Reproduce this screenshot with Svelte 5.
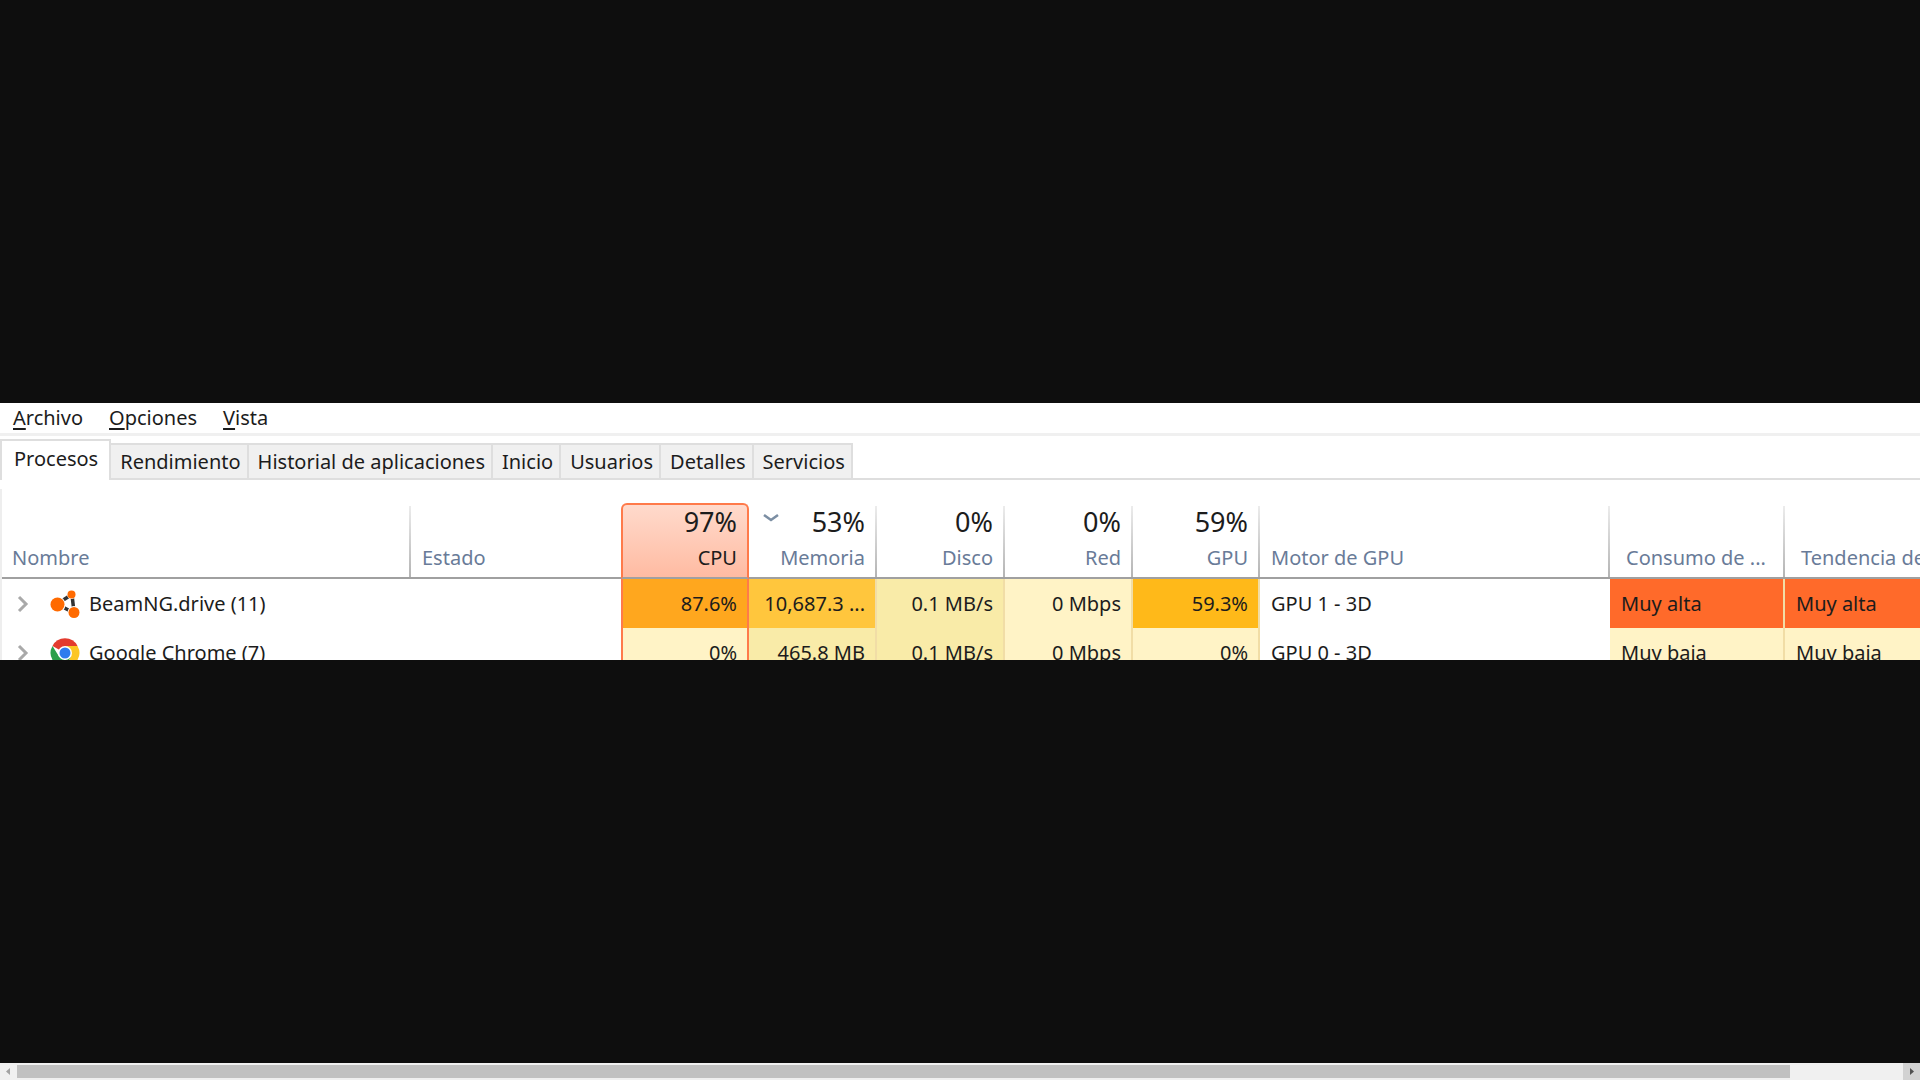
<script>
const menus = ["Archivo", "Opciones", "Vista"]
const tabs = ["Procesos", "Rendimiento", "Historial de aplicaciones", "Inicio", "Usuarios", "Detalles", "Servicios"]
const columns = [
    { id: "name", label: "Nombre" },
    { id: "status", label: "Estado" },
    { id: "cpu", label: "CPU", total: "97%" },
    { id: "memory", label: "Memoria", total: "53%" },
    { id: "disk", label: "Disco", total: "0%" },
    { id: "network", label: "Red", total: "0%" },
    { id: "gpu", label: "GPU", total: "59%" },
    { id: "engine", label: "Motor de GPU" },
    { id: "power", label: "Consumo de ..." },
    { id: "trend", label: "Tendencia de" }
]
const processes = [
    {
        name: "BeamNG.drive (11)",
        icon: "beam",
        cells: [
            ["cpu", "87.6%", "heat5"],
            ["memory", "10,687.3 ...", "heat3"],
            ["disk", "0.1 MB/s", "heat2"],
            ["network", "0 Mbps", "heat1"],
            ["gpu", "59.3%", "heat4"],
            ["engine", "GPU 1 - 3D", ""],
            ["power", "Muy alta", "heat6"],
            ["trend", "Muy alta", "heat6"]
        ]
    },
    {
        name: "Google Chrome (7)",
        icon: "chrome",
        cells: [
            ["cpu", "0%", "heat1"],
            ["memory", "465.8 MB", "heat2"],
            ["disk", "0.1 MB/s", "heat2"],
            ["network", "0 Mbps", "heat1"],
            ["gpu", "0%", "heat1"],
            ["engine", "GPU 0 - 3D", ""],
            ["power", "Muy baja", "heat1"],
            ["trend", "Muy baja", "heat1"]
        ]
    }
]
let selected = $state("Procesos")
</script>

<div class="page">
    <main class="stage">
        <div class="window">
            <nav class="menu">
                {#each menus as menu}
                    <button><u>{menu[0]}</u>{menu.slice(1)}</button>
                {/each}
            </nav>
            <div class="tabs" role="tablist">
                {#each tabs as tab}
                    <button role="tab" class:active={selected === tab} aria-selected={selected === tab} onclick={() => selected = tab}>{tab}</button>
                {/each}
            </div>
            <div class="list">
                <table>
                    <colgroup>
                        {#each columns as column}
                            <col class="col-{column.id}" />
                        {/each}
                    </colgroup>
                    <thead>
                        <tr>
                            {#each columns as column}
                                <th class={column.id} class:number={column.total}>
                                    {#if column.total}
                                        <div class="total">
                                            {#if column.id === "memory"}
                                                <svg class="sort" width="16" height="10" viewBox="0 0 16 10"><path d="M1 2l7 5 7-5" fill="none" stroke="#7b8ea3" stroke-width="2.6" /></svg>
                                            {/if}
                                            <span>{column.total}</span>
                                        </div>
                                    {/if}
                                    <div class="label">{column.label}</div>
                                </th>
                            {/each}
                        </tr>
                    </thead>
                    <tbody>
                        {#each processes as process}
                            <tr>
                                <td class="name">
                                    <div class="process">
                                        <button class="expand" aria-label="Expandir {process.name}">
                                            <svg width="12" height="18" viewBox="0 0 12 18"><path d="M2 2l7 7-7 7" fill="none" stroke="#a9a9a9" stroke-width="3" /></svg>
                                        </button>
                                        {#if process.icon === "beam"}
                                            <svg width="30" height="30" viewBox="0 0 30 30">
                                                <path d="M7 15L21 6M7 15l17 9M22 6l2 17" stroke="#333" stroke-width="3.500" />
                                                <circle cx="7.500" cy="15.500" r="8" fill="#fff" />
                                                <circle cx="21.500" cy="5.500" r="4.500" fill="#fff" />
                                                <circle cx="24" cy="23.500" r="6.500" fill="#fff" />
                                                <circle cx="7.500" cy="15.500" r="7" fill="#ff6a00" />
                                                <circle cx="21.500" cy="5.500" r="4" fill="#ff6a00" />
                                                <circle cx="24" cy="23.500" r="5.500" fill="#ff6a00" />
                                            </svg>
                                        {:else}
                                            <svg width="30" height="30" viewBox="0 0 30 30">
                                                <path d="M15 15L2.500 8A14 14 0 0 1 27.500 8z" fill="#e33b2e" />
                                                <path d="M15 8h12.500A14 14 0 0 1 15 29l6-10.500z" fill="#fcc624" />
                                                <path d="M2.500 8L9 18.500 15 22l6-3.500L15 29A14 14 0 0 1 2.500 8z" fill="#2a9f4b" />
                                                <circle cx="15" cy="15" r="7" fill="#fff" />
                                                <circle cx="15" cy="15" r="5.500" fill="#2f7cee" />
                                            </svg>
                                        {/if}
                                        <span>{process.name}</span>
                                    </div>
                                </td>
                                <td class="status"></td>
                                {#each process.cells as [id, value, heat]}
                                    <td class="{id} {heat}">{value}</td>
                                {/each}
                            </tr>
                        {/each}
                    </tbody>
                </table>
            </div>
        </div>
    </main>
    <div class="scroll">
        <button aria-label="Izquierda"><svg width="17" height="17" viewBox="0 0 17 17"><path d="M10 5v7L6 8.500z" fill="#a3a3a3" /></svg></button>
        <div class="track"><div class="thumb"></div></div>
        <button class="right" aria-label="Derecha"><svg width="17" height="17" viewBox="0 0 17 17"><path d="M7 5v7l4-3.500z" fill="#505050" /></svg></button>
    </div>
</div>

<style>
    :global(body) {
        background: #0e0e0e;
    }
    .page {
        display: flex;
        flex-direction: column;
        height: 100vh;
        overflow: hidden;
        font-family: "Noto Sans", "Open Sans", sans-serif;
        font-size: 20px;
        line-height: 28px;
        color: #1c1c1c;
    }
    button {
        border: 0;
        margin: 0;
        padding: 0;
        background: none;
        font: inherit;
        color: inherit;
    }
    svg {
        display: block;
        flex-shrink: 0;
    }
    .stage {
        display: flex;
        flex: 1;
        flex-direction: column;
        justify-content: center;
        min-height: 0;
    }
    .window {
        height: 257px;
        background: #fff;
        overflow: hidden;
    }
    .menu {
        display: flex;
        gap: 26px;
        height: 30px;
        padding-left: 13px;
        border-bottom: 3px solid #f0f0f0;
    }
    .menu u {
        text-underline-offset: 3px;
        text-decoration-thickness: 2px;
        text-decoration-skip-ink: none;
    }
    .tabs {
        display: flex;
        align-items: flex-end;
        height: 44px;
        background: linear-gradient(#dedede, #dedede) 0 42px / 100% 2px no-repeat;
    }
    .tabs button {
        box-sizing: border-box;
        height: 37px;
        padding: 0 6px 0 9px;
        border: solid #dedede;
        border-width: 2px 2px 2px 0;
        background: #f0f0f0;
        white-space: nowrap;
    }
    .tabs button.active {
        height: 41px;
        padding: 0 11px 4px 12px;
        border-width: 2px 2px 0;
        background: #fff;
    }
    .list {
        margin-top: 9px;
        padding-top: 14px;
        border-left: 2px solid #eee;
    }
    table {
        width: 100%;
        table-layout: fixed;
        border-collapse: separate;
        border-spacing: 0;
        white-space: nowrap;
    }
    .col-name {
        width: 409px;
    }
    .col-status {
        width: 210px;
    }
    .col-cpu,
    .col-memory,
    .col-disk,
    .col-network {
        width: 128px;
    }
    .col-gpu {
        width: 127px;
    }
    .col-engine {
        width: 350px;
    }
    .col-power {
        width: 175px;
    }
    th {
        box-sizing: border-box;
        height: 76px;
        padding: 0 11px 5px;
        border-bottom: 2px solid #a0a0a0;
        background: linear-gradient(#ececec, #b4b4b4) right 0 top 3px / 2px 71px no-repeat;
        font-weight: normal;
        text-align: left;
        vertical-align: bottom;
        overflow: hidden;
    }
    th.number {
        padding-right: 12px;
        text-align: right;
    }
    th.name {
        padding-left: 10px;
    }
    th.status,
    th.trend {
        background: none;
    }
    th.cpu {
        padding-right: 10px;
        border: 2px solid #ff7a4a;
        border-bottom-color: #a0a0a0;
        border-radius: 6px 6px 0 0;
        background: linear-gradient(#ffdacc, #ffbba2);
    }
    th.power,
    th.trend {
        padding-left: 16px;
    }
    .total {
        display: flex;
        align-items: center;
        justify-content: flex-end;
        margin-bottom: 6px;
        font-size: 27px;
        line-height: 32px;
    }
    .sort {
        margin-right: auto;
        margin-left: 3px;
        margin-bottom: 8px;
    }
    .label {
        color: #697b98;
    }
    .cpu .label {
        color: #1c1c1c;
    }
    td {
        box-sizing: border-box;
        height: 49px;
        padding: 0 11px;
        overflow: hidden;
    }
    td.name {
        padding-left: 15px;
    }
    .process {
        display: flex;
        align-items: center;
    }
    .process span {
        margin-left: 9px;
    }
    .expand {
        margin-right: 21px;
    }
    td.cpu,
    td.memory,
    td.disk,
    td.network,
    td.gpu {
        padding: 0 10px;
        border-right: 2px solid #f1dda6;
        text-align: right;
    }
    td.cpu {
        border-right-color: #ff7a4a;
        border-left: 2px solid #ff7a4a;
    }
    td.power {
        border-right: 2px solid #f1dda6;
    }
    .heat1 {
        background: #fff3c6;
    }
    .heat2 {
        background: #f9eba8;
    }
    .heat3 {
        background: #ffc63d;
    }
    .heat4 {
        background: #ffb919;
    }
    .heat5 {
        background: #ffa71e;
    }
    .heat6 {
        background: #ff6a2a;
    }
    .scroll {
        display: flex;
        height: 17px;
        background: #f0f0f0;
    }
    .scroll .right {
        background: #d2d2d2;
    }
    .track {
        flex: 1;
        padding: 2px 0;
    }
    .thumb {
        width: 94%;
        height: 13px;
        background: #c1c1c1;
    }
</style>
